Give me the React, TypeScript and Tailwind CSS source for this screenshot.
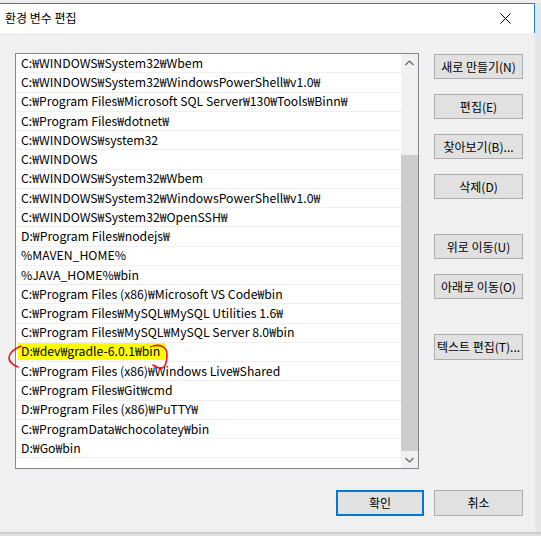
const paths = [
  "C:₩WINDOWS₩System32₩Wbem",
  "C:₩WINDOWS₩System32₩WindowsPowerShell₩v1.0₩",
  "C:₩Program Files₩Microsoft SQL Server₩130₩Tools₩Binn₩",
  "C:₩Program Files₩dotnet₩",
  "C:₩WINDOWS₩system32",
  "C:₩WINDOWS",
  "C:₩WINDOWS₩System32₩Wbem",
  "C:₩WINDOWS₩System32₩WindowsPowerShell₩v1.0₩",
  "C:₩WINDOWS₩System32₩OpenSSH₩",
  "D:₩Program Files₩nodejs₩",
  "%MAVEN_HOME%",
  "%JAVA_HOME%₩bin",
  "C:₩Program Files (x86)₩Microsoft VS Code₩bin",
  "C:₩Program Files₩MySQL₩MySQL Utilities 1.6₩",
  "C:₩Program Files₩MySQL₩MySQL Server 8.0₩bin",
  "D:₩dev₩gradle-6.0.1₩bin",
  "C:₩Program Files (x86)₩Windows Live₩Shared",
  "C:₩Program Files₩Git₩cmd",
  "D:₩Program Files (x86)₩PuTTY₩",
  "C:₩ProgramData₩chocolatey₩bin",
  "D:₩Go₩bin",
];

const HIGHLIGHT = 15;

function WinButton({ label, className = "" }: { label: string; className?: string }) {
  return (
    <button
      className={`h-[25px] w-[89px] border border-[#adadad] bg-[#e1e1e1] text-[12px] text-black flex items-center justify-center ${className}`}
    >
      {label}
    </button>
  );
}

export default function App() {
  return (
    <div className="w-[541px] h-[536px] bg-[#e6e6e6] flex flex-col overflow-hidden font-['Noto_Sans_CJK_KR','Noto_Sans',sans-serif] text-black">
      <div className="h-[3px] bg-[#eeeeee]" />
      <div className="flex">
        <div className="w-[535px] flex flex-col">
          {/* title bar */}
          <div className="h-[30px] bg-white border-t border-r border-[#1883d7] flex items-center justify-between pl-[5px] pr-[23px]">
            <span className="text-[12px] leading-none -mt-px">환경 변수 편집</span>
            <svg width="11" height="11" viewBox="0 0 11 11">
              <path d="M0.5 0.5 L10.5 10.5 M10.5 0.5 L0.5 10.5" stroke="#000" strokeWidth="1" />
            </svg>
          </div>

          {/* body */}
          <div className="h-[499px] bg-[#f0f0f0] pt-[20px] pl-[15px] flex flex-col">
            <div className="flex gap-[15px]">
              {/* list */}
              <div className="relative w-[404px] h-[416px] border border-[#828790] bg-white flex">
                <div className="flex-1 flex flex-col">
                  {paths.map((p, i) => (
                    <div
                      key={i}
                      className="h-[19.25px] border-b border-[#f0f0f0] flex items-center pl-[5px] text-[12.25px] whitespace-nowrap"
                    >
                      {i === HIGHLIGHT ? (
                        <span className="bg-[#ffff00] h-[17px] leading-[17px] pl-[3px] pr-[5px] -ml-[3px]">{p}</span>
                      ) : (
                        p
                      )}
                    </div>
                  ))}
                </div>
                {/* scrollbar */}
                <div className="w-[17px] bg-[#f0f0f0] flex flex-col">
                  <div className="h-[17px] flex items-center justify-center">
                    <svg width="9" height="6" viewBox="0 0 9 6">
                      <path d="M0.5 5 L4.5 1 L8.5 5" fill="none" stroke="#606060" strokeWidth="1.2" />
                    </svg>
                  </div>
                  <div className="h-[84px]" />
                  <div className="flex-1 bg-[#cdcdcd]" />
                  <div className="h-[17px] flex items-center justify-center">
                    <svg width="9" height="6" viewBox="0 0 9 6">
                      <path d="M0.5 1 L4.5 5 L8.5 1" fill="none" stroke="#606060" strokeWidth="1.2" />
                    </svg>
                  </div>
                </div>
                {/* red annotation */}
                <svg
                  className="absolute left-[-15px] top-[288px] pointer-events-none"
                  width="172"
                  height="40"
                  viewBox="0 0 172 40"
                >
                  <path
                    d="M20 4 C13 7 8 11 8 16 C8 20 12 23 17 25"
                    fill="none"
                    stroke="#e8141b"
                    strokeWidth="1.6"
                    strokeLinecap="round"
                  />
                  <path
                    d="M152 4 C159 2 166 5 166 12 C166 19 165 25 161 26 C158 27 155 25 152 23"
                    fill="none"
                    stroke="#e8141b"
                    strokeWidth="1.6"
                    strokeLinecap="round"
                  />
                </svg>
              </div>

              {/* side buttons */}
              <div className="flex flex-col pt-px">
                <WinButton label="새로 만들기(N)" />
                <WinButton label="편집(E)" className="mt-[15px]" />
                <WinButton label="찾아보기(B)..." className="mt-[15px]" />
                <WinButton label="삭제(D)" className="mt-[15px]" />
                <WinButton label="위로 이동(U)" className="mt-[35px]" />
                <WinButton label="아래로 이동(O)" className="mt-[15px]" />
                <WinButton label="텍스트 편집(T)..." className="mt-[35px] h-[26px]" />
              </div>
            </div>

            {/* bottom buttons */}
            <div className="flex justify-end gap-[10px] pr-[12px] mt-[21px]">
              <button className="h-[26px] w-[88px] border-2 border-[#0078d7] bg-[#e1e1e1] text-[12px] flex items-center justify-center">
                확인
              </button>
              <button className="h-[26px] w-[89px] border border-[#adadad] bg-[#e1e1e1] text-[12px] flex items-center justify-center">
                취소
              </button>
            </div>
          </div>
        </div>
        <div className="flex-1 bg-[#e6e6e6]" />
      </div>
      <div className="h-[4px] bg-gradient-to-b from-[#c8c8c8] to-[#e6e6e6]" />
    </div>
  );
}
